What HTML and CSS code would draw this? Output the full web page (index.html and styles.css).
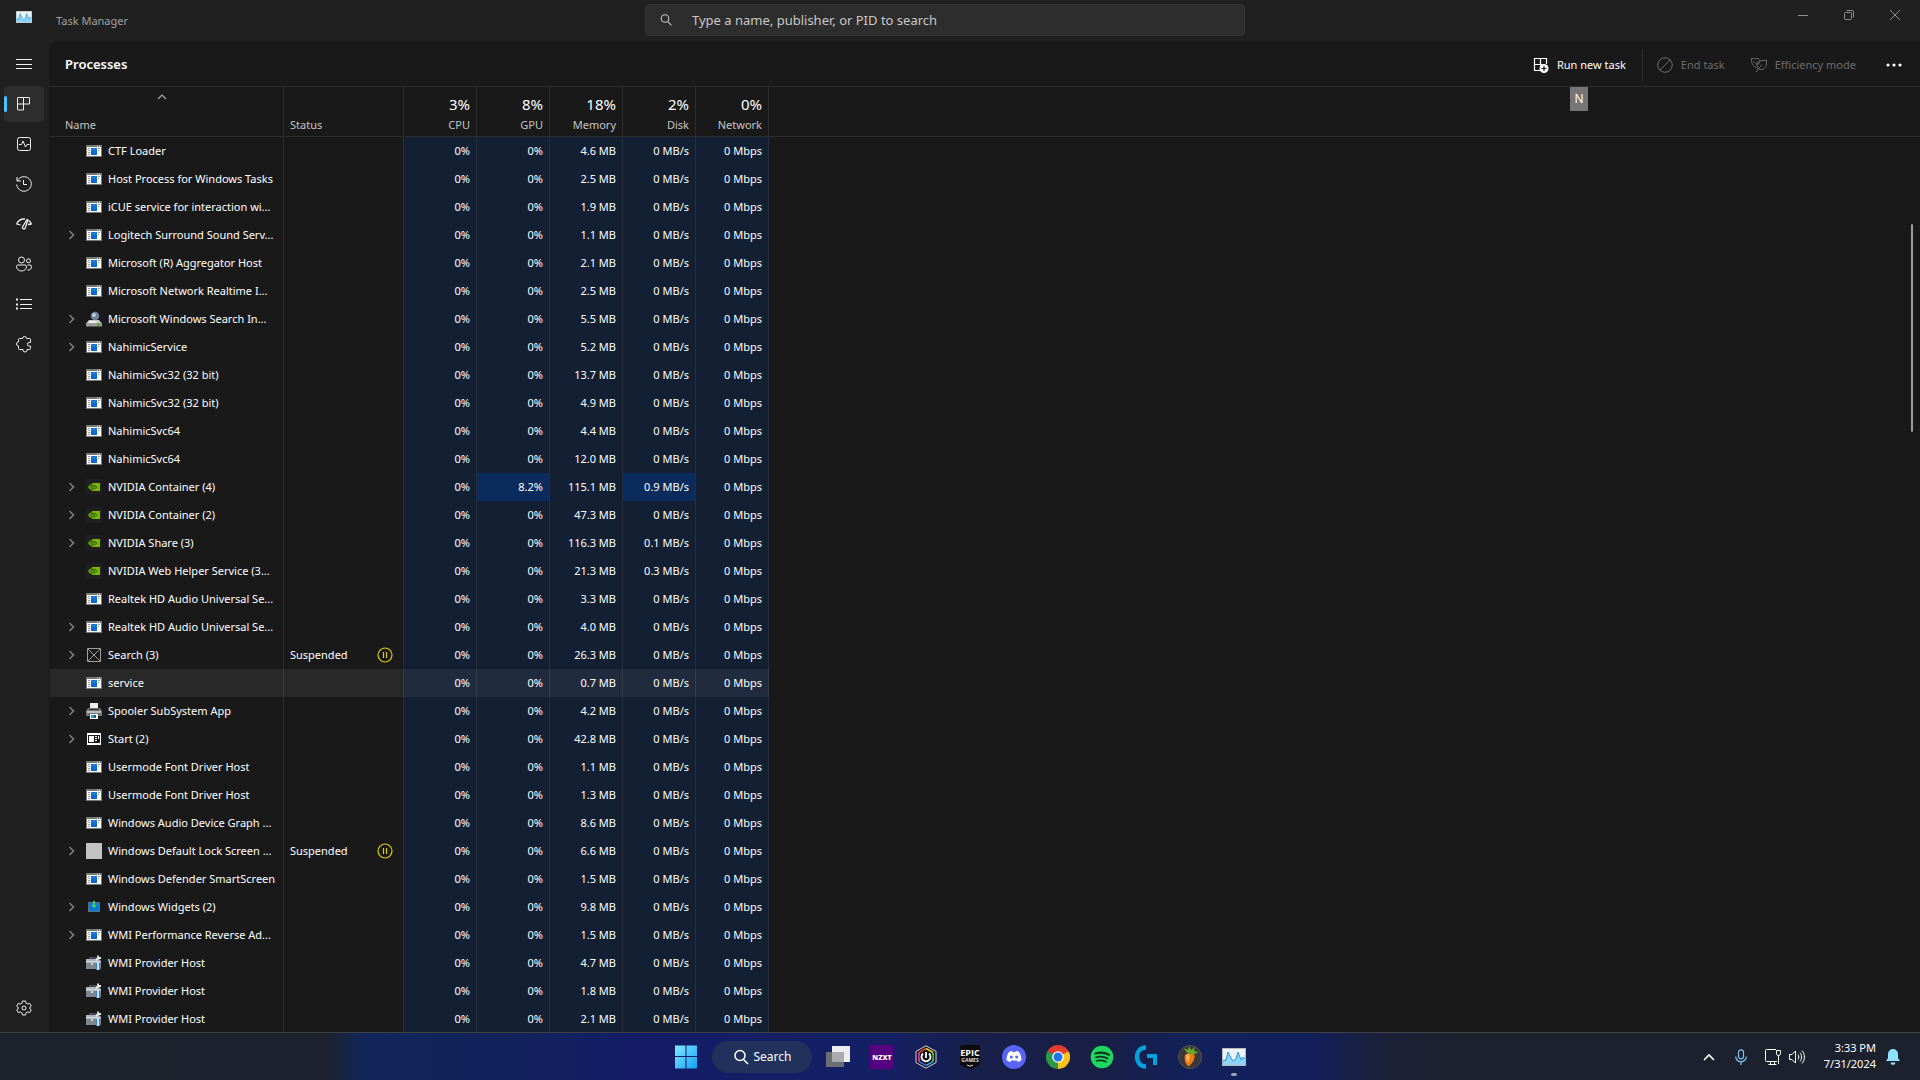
FILE: index.html
```html
<!DOCTYPE html>
<html lang="en">
<head>
  <meta charset="UTF-8">
  <meta name="viewport" content="width=device-width, initial-scale=1.0">
  <title>Task Manager</title>
  <link rel="stylesheet" href="styles.css">
</head>
<body>
  <!-- Process icons, used by the table rows -->
  <svg class="sprite" aria-hidden="true">
    <symbol id="icon-app" viewBox="0 0 16 16">
      <path fill="#767676" d="M0 2h16v12H0z"/>
      <path fill="#fff" d="M1 4h14v9H1z"/>
      <path fill="#0a6cc8" d="M5 5h6v7H5z"/>
      <path fill="#1a7ad2" d="M5 5h6v3H5z"/>
      <path stroke="#9a9a9a" d="M2 5.500h2M2 7.500h2M2 9.500h2M2 11.500h2M12 5.500h2M12 7.500h1"/>
      <path fill="#ddd" d="M11 2.500h1v1h-1zM13 2.500h1v1h-1z"/>
    </symbol>
    <symbol id="icon-indexer" viewBox="0 0 16 16">
      <circle cx="9" cy="5" r="4.300" fill="#6f8299"/>
      <circle cx="8" cy="4" r="2" fill="#b9cbe0"/>
      <path fill="#c9c9c9" d="M3 9h10l3 3.500H0z"/>
      <path fill="#ededed" d="M4 10h6l1 2H2z"/>
      <path fill="#9b9b9b" d="M0 12h16v3.500H0z"/>
      <path fill="#4eb02c" d="M11 12h3v3h-3z"/>
    </symbol>
    <symbol id="icon-nvidia" viewBox="0 0 16 16">
      <path fill="#1f1f1f" d="M0 0h16v16H0z"/>
      <path fill="#76b900" d="M6 4h8v8H6z"/>
      <path fill="#6aa600" d="M2 8c1.500-2.500 4-3.500 7-2.700 1 .7 1.800 1.700 2 2.700-2 3-6 3.800-7.500 2z"/>
      <path fill="none" stroke="#2c4d03" stroke-width=".7" d="M3.500 8c1.500-2 5-2.500 7.500.3-1.800 2.400-5 2.500-6 .4.600-1.700 2.500-1.800 3.800-.2-.8 1-1.500 1-2.300.3"/>
    </symbol>
    <symbol id="icon-missing" viewBox="0 0 16 16">
      <path fill="none" stroke="#a0a0a0" d="M1.500 1.500h13v13h-13zM2 2l12 12M14 2 2 14"/>
    </symbol>
    <symbol id="icon-printer" viewBox="0 0 16 16">
      <path fill="#eee" d="M4 0h8v7H4z"/>
      <path fill="#777" d="M2 5h12l2 3v5H0V8z"/>
      <path fill="#bdbdbd" d="M1 8h14v2H1z"/>
      <path fill="#333" d="M3 6h10v1H3zM3 11h10v1H3z"/>
      <path fill="#fff" d="M4 11h8v5H4z"/>
      <path fill="#2aa1b8" d="M5 12h3v3H5z"/>
      <path fill="#1d5d8c" d="M8 12h2v3H8z"/>
    </symbol>
    <symbol id="icon-start" viewBox="0 0 16 16">
      <path fill="#fff" d="M1 2h14v12H1z"/>
      <path fill="#1a1a1a" d="M2 4h12v8H2z"/>
      <path fill="#fff" d="M3 5h5v6H3zM9 5h2v1H9zM9 7h2v1H9zM9 9h2v1H9zM12 5h1v3h-1z"/>
    </symbol>
    <symbol id="icon-blank" viewBox="0 0 16 16">
      <path fill="#c3c3c3" d="M0 0h16v16H0z"/>
    </symbol>
    <symbol id="icon-widgets" viewBox="0 0 16 16">
      <path fill="#5a6f86" d="M2 3h12v10H2z"/>
      <path fill="#0b78d0" d="M3 4h10v8H3z"/>
      <path fill="#45d06a" d="M7 2h2v4h2L8 9 5 6h2z"/>
    </symbol>
    <symbol id="icon-toolbox" viewBox="0 0 16 16">
      <path fill="#454a52" d="M3 2h7v3H3z"/>
      <path fill="#aeb5be" d="M0 4h13l2 2v2H0z"/>
      <path fill="#7d858f" d="M0 8h15v6H0z"/>
      <path fill="#d4d8dd" d="M0 6h12v1H0zM5 8h2v2H5z"/>
      <path fill="none" stroke="#ececec" stroke-width="1.800" d="m10 5 3-3M12 .5v2.500h3"/>
      <path fill="#3f7fb8" d="M10 8h4v7h-4z"/>
      <path fill="#c4e4fa" d="M11 6h2v9h-2z"/>
    </symbol>
    <symbol id="icon-chevron" viewBox="0 0 8 10">
      <path fill="none" stroke="#7d7d7d" stroke-width="1.600" d="m1.500 1 4 4-4 4"/>
    </symbol>
    <symbol id="icon-pause" viewBox="0 0 16 16">
      <circle cx="8" cy="8" r="7" fill="none" stroke="#e2cd00" stroke-width="1.200"/>
      <path stroke="#e2cd00" stroke-width="1.200" d="M6.500 5v6M9.500 5v6"/>
    </symbol>
    <symbol id="icon-taskmgr" viewBox="0 0 24 18">
      <path fill="#b5b9bd" d="M0 0h24v18H0z"/>
      <path fill="#eef3f7" d="M1 1h22v16H1z"/>
      <path fill="#8ed3f8" d="M1 12l3-1 2-7 3 6 2 3 3-2 2-7 3 8 2-3 2 2v6H1z"/>
      <path fill="none" stroke="#2297dd" d="M1 13l3-1 2-8 3 6 2 3 3-2 2-7 3 8 2-3 2 2"/>
    </symbol>
  </svg>

  <div class="window">
    <header class="titlebar">
      <div class="app-title">
        <svg class="app-icon" viewBox="0 0 24 18"><use href="#icon-taskmgr"/></svg>
        <span>Task Manager</span>
      </div>
      <label class="search-box">
        <svg width="12" height="12" viewBox="0 0 12 12" fill="none" stroke="#c8c8c8" stroke-width="1.100"><circle cx="5" cy="4.500" r="3.800"/><path d="m7.600 7.400 3.800 4"/></svg>
        <input type="search" aria-label="Search processes" placeholder="Type a name, publisher, or PID to search">
      </label>
      <div class="window-controls">
        <button type="button" aria-label="Minimize"><svg width="12" height="12" viewBox="0 0 12 12"><path d="M1 6.500h10"/></svg></button>
        <button type="button" aria-label="Restore"><svg width="12" height="12" viewBox="0 0 12 12"><rect x="1.500" y="3.500" width="7" height="7" rx="1"/><path d="M3.500 1.500H9A1.500 1.500 0 0 1 10.500 3v5.500"/></svg></button>
        <button type="button" aria-label="Close"><svg width="12" height="12" viewBox="0 0 12 12"><path d="m1 1 10 10M11 1 1 11"/></svg></button>
      </div>
    </header>

    <div class="body">
      <nav class="sidebar">
        <button type="button" aria-label="Open navigation"><svg viewBox="0 0 16 16"><path d="M0 3.500h16M0 8.500h16M0 12.500h16"/></svg></button>
        <button type="button" class="active" aria-label="Processes"><svg viewBox="0 0 16 16"><path d="M2 1.500h11a.5.5 0 0 1 .5.5v6H7.500v6H2a.5.5 0 0 1-.5-.5V2a.5.5 0 0 1 .5-.5zM7.500 1.500v6.500M1.500 8H8"/></svg></button>
        <button type="button" aria-label="Performance"><svg viewBox="0 0 16 16"><rect x="1.500" y="1.500" width="13" height="13" rx="2"/><path d="M3 8.500h2.500L7 5l2.500 6L11 8.500h2.500"/></svg></button>
        <button type="button" aria-label="App history"><svg viewBox="0 0 16 16"><path d="M1 1v4h4M1.300 5A7.300 7.300 0 1 1 .7 8.500M7.500 4v4.500H11"/></svg></button>
        <button type="button" aria-label="Startup apps"><svg viewBox="0 0 16 16"><path stroke-width="1.300" d="M.5 8.500A8.500 8.500 0 0 1 9 3M13 4.500a8 8 0 0 1 2.500 4M1 8l3.500 1M12 8.500l3.500-.5M11 3.500 6.500 11a1.500 1.500 0 0 0 2.500 1.500L12 4z"/></svg></button>
        <button type="button" aria-label="Users"><svg viewBox="0 0 16 16"><circle cx="5.500" cy="4" r="3"/><circle cx="12.500" cy="4.800" r="2"/><path d="M2 9h7a1.500 1.500 0 0 1 1.500 1.500C10.500 13.500 8 15 5.500 15S.5 13.500.5 10.500A1.500 1.500 0 0 1 2 9zM11.500 9H14a1.500 1.500 0 0 1 1.500 1.500c0 2.500-1.500 4-4 3.500"/></svg></button>
        <button type="button" aria-label="Details"><svg viewBox="0 0 16 16"><path d="M4 3.500h12M4 8.500h12M4 12.500h12"/><path d="M0 3.500h2M0 8.500h2M0 12.500h2" stroke-width="2"/></svg></button>
        <button type="button" aria-label="Services"><svg viewBox="0 0 16 16"><path stroke-linejoin="round" d="M3.500 2.500h3a2 2 0 0 1 4 0h3a1 1 0 0 1 1 1v3h-1.300a1.800 1.800 0 0 0 0 3.600h1.300v2.400a1 1 0 0 1-1 1h-2.500v.5a2 2 0 0 1-4 0v-.5H3.500a1 1 0 0 1-1-1V10a2 2 0 0 1 0-4V3.500a1 1 0 0 1 1-1z"/></svg></button>
        <button type="button" class="settings" aria-label="Settings"><svg viewBox="0 0 16 16"><circle cx="8" cy="8" r="2"/><path d="M6.500 1h3l.6 2.200 1.400.8 2.200-.6 1.500 2.600L13.500 8l1.700 2-1.500 2.600-2.200-.6-1.400.8L9.500 15h-3l-.6-2.200-1.400-.8-2.200.6L.8 10l1.700-2L.8 6l1.500-2.600 2.200.6 1.400-.8z"/></svg></button>
      </nav>

      <main class="content">
        <div class="toolbar">
          <h1>Processes</h1>
          <div class="actions">
            <button type="button" class="run-task">
              <svg width="16" height="16" viewBox="0 0 16 16"><path fill="none" stroke="#fff" stroke-width="1.200" d="M7 13.500H1.500v-12h12V7M7.500 1.500v7M1.500 7.500H9"/><circle cx="11" cy="11.500" r="4.500" fill="#fff"/><path stroke="#191919" stroke-width="1.200" d="M11 9v5M8.500 11.500h5"/></svg>
              <span>Run new task</span>
            </button>
            <button type="button" class="end-task" disabled>
              <svg width="16" height="16" viewBox="0 0 16 16" fill="none" stroke="#6c6c6c"><circle cx="8" cy="8" r="7.300"/><path d="M2.800 13.200 13.200 2.800"/></svg>
              <span>End task</span>
            </button>
            <button type="button" class="efficiency" disabled>
              <svg width="16" height="16" viewBox="0 0 16 16" fill="none" stroke="#6c6c6c"><path d="M5.500 10.500C2 9.500.5 7 .5 1.500c2.500 1 4.500-1 7 .3 1 .5 1.500 1 1.500 2M3 4.500l3.500 3.500L9 4.500"/><path d="M6.500 5.500C9 3 12 4 15.500 3c.3 5.500-1 9-4.500 9.500-3.500.5-5.500-1.500-4.500-7zM5 15l6-7.500"/></svg>
              <span>Efficiency mode</span>
            </button>
            <button type="button" class="more" aria-label="See more">
              <svg width="16" height="4" viewBox="0 0 16 4" fill="#fff"><circle cx="2" cy="2" r="1.600"/><circle cx="8" cy="2" r="1.600"/><circle cx="14" cy="2" r="1.600"/></svg>
            </button>
          </div>
          <kbd class="key-tip">N</kbd>
        </div>

        <div class="table-wrap">
          <table class="processes">
            <colgroup>
              <col class="col-name">
              <col class="col-status">
              <col class="col-value" span="5">
              <col>
            </colgroup>
            <thead>
              <tr>
                <th class="name" aria-sort="ascending"><button type="button"><svg width="10" height="6" viewBox="0 0 10 6"><path fill="none" stroke="#aaa" stroke-width="1.200" d="M1 5l4-4 4 4"/></svg><span>Name</span></button></th>
                <th class="status"><button type="button"><span>Status</span></button></th>
                <th><button type="button"><strong>3%</strong><span>CPU</span></button></th>
                <th><button type="button"><strong>8%</strong><span>GPU</span></button></th>
                <th><button type="button"><strong>18%</strong><span>Memory</span></button></th>
                <th><button type="button"><strong>2%</strong><span>Disk</span></button></th>
                <th><button type="button"><strong>0%</strong><span>Network</span></button></th>
                <td></td>
              </tr>
            </thead>
            <tbody id="process-list"></tbody>
          </table>
        </div>
        <div class="scroll-thumb"></div>
      </main>
    </div>
  </div>

  <footer class="taskbar">
    <div class="pinned">
      <button type="button" aria-label="Start">
        <svg width="24" height="24" viewBox="0 0 24 24"><defs><linearGradient id="win" x1="0" y1="0" x2="1" y2="1"><stop offset="0" stop-color="#7fe9ff"/><stop offset="1" stop-color="#14a0f5"/></linearGradient></defs><path fill="url(#win)" d="M1 .5h10.500V11H1zM12.500.5H23V11H12.500zM1 12h10.500v11.500H1zM12.500 12H23v11.500H12.500z"/></svg>
      </button>
      <button type="button" class="taskbar-search">
        <svg width="16" height="16" viewBox="0 0 16 16" fill="none" stroke="#fff" stroke-width="1.500"><circle cx="7" cy="6.500" r="5"/><path d="m10.500 10.500 4.500 4.500"/></svg>
        <span>Search</span>
      </button>
      <button type="button" aria-label="Task view">
        <svg width="24" height="24" viewBox="0 0 24 24"><path fill="#ededed" d="M6 1h18v16H6z"/><path fill="#6b6d72" d="M0 7h18v15H0z"/><path fill="#a9abaf" d="M6 7h12v10H6z"/></svg>
      </button>
      <button type="button" aria-label="NZXT CAM">
        <svg width="24" height="24" viewBox="0 0 24 24"><path fill="#56007f" d="M0 0h24v24H0z"/><text class="nzxt-text" x="12" y="15" text-anchor="middle">NZXT</text></svg>
      </button>
      <button type="button" aria-label="iCUE">
        <svg width="24" height="24" viewBox="0 0 24 24"><path fill="#111" stroke="#d7d7d7" d="m12 .8 10 5.600v11.200l-10 5.600-10-5.600V6.400z"/><g fill="none" stroke-width="2"><path stroke="#e2383c" d="m5 7.500 7-4"/><path stroke="#e6c52a" d="m12 3.500 7 4"/><path stroke="#37b34a" d="M19 7.500v9"/><path stroke="#2b9be8" d="m19 16.500-7 4"/><path stroke="#4b57dc" d="m12 20.500-7-4"/><path stroke="#d338b8" d="M5 16.500v-9"/></g><circle cx="12" cy="12" r="6.500" fill="#111"/><path fill="none" stroke="#fff" stroke-width="1.800" d="M9 8.500a4.500 4.500 0 1 0 6 0M12 7v6"/></svg>
      </button>
      <button type="button" aria-label="Epic Games">
        <svg width="24" height="24" viewBox="0 0 24 24"><path fill="#0c0c0e" d="M4 0h16a2 2 0 0 1 2 2v18l-10 4-10-4V2a2 2 0 0 1 2-2z"/><text class="epic-text" x="12" y="11" text-anchor="middle">EPIC</text><text class="games-text" x="12" y="17" text-anchor="middle">GAMES</text><path stroke="#ddd" fill="none" d="m9 20 3 1.200 3-1.200"/></svg>
      </button>
      <button type="button" aria-label="Discord">
        <svg width="24" height="24" viewBox="0 0 24 24"><circle cx="12" cy="12" r="12" fill="#5865f2"/><path fill="#fff" d="M7 7c1-.6 2-.9 3-1l.5 1h3l.5-1c1 .1 2 .4 3 1 1.800 2.500 2.600 5 2.400 8.200-1 .9-2.200 1.500-3.600 1.800l-.9-1.400h-5.800L8.200 17c-1.400-.3-2.600-.9-3.600-1.800C4.400 12 5.200 9.500 7 7z"/><circle cx="9.300" cy="12" r="1.500" fill="#5865f2"/><circle cx="14.700" cy="12" r="1.500" fill="#5865f2"/></svg>
      </button>
      <button type="button" aria-label="Google Chrome">
        <svg width="24" height="24" viewBox="0 0 24 24"><path fill="#e33b2e" d="M12 12 1.600 6A12 12 0 0 1 22.400 6z"/><path fill="#fcc31e" d="M12 12 22.400 6A12 12 0 0 1 12 24z"/><path fill="#2a9a48" d="M12 12v12A12 12 0 0 1 1.600 6z"/><path fill="#e33b2e" d="M12 6h10.400l-5.200 3z"/><path fill="#fcc31e" d="m17.200 15-5.200 9 .5-7z"/><path fill="#2a9a48" d="M1.600 6 6.800 15l2-4z"/><circle cx="12" cy="12" r="5.800" fill="#fff"/><circle cx="12" cy="12" r="4.500" fill="#1f74e8"/></svg>
      </button>
      <button type="button" aria-label="Spotify">
        <svg width="24" height="24" viewBox="0 0 24 24"><circle cx="12" cy="12" r="11.300" fill="#1ed760"/><g fill="none" stroke="#12331d" stroke-linecap="round"><path stroke-width="2.200" d="M5.500 8.500c4.500-1.300 9.500-.8 13.500 1.300"/><path stroke-width="1.900" d="M6 12.300c4-1.100 8-.7 11.500 1.100"/><path stroke-width="1.600" d="M6.500 15.800c3.500-.8 6.500-.5 9.500 1"/></g></svg>
      </button>
      <button type="button" aria-label="Logitech G HUB">
        <svg width="24" height="24" viewBox="0 0 24 24"><path fill="none" stroke="#00a3e0" stroke-width="4.500" d="M12 2.500C5.500 2.500 3 7.500 3 12s2.500 9.500 9 9.500"/><path fill="#00a3e0" d="M13 9h10v11h-4v-7h-6z"/></svg>
      </button>
      <button type="button" aria-label="FL Studio">
        <svg width="24" height="24" viewBox="0 0 24 24"><circle cx="12" cy="12" r="11.500" fill="#39373a" stroke="#555"/><path fill="#f07a14" d="M7 10c2-2.500 7.500-2.500 9.500 0 .8 4-2 8.500-6 11.500-3.500-3-4.500-7.500-3.500-11.500z"/><path fill="#ffb84d" d="M8.500 10c1-1 2.500-1 3 0 0 4-.5 5-1.500 8-1.500-3-2-5-1.500-8z"/><path fill="#6aa82a" d="M12 9C9 8 7 6 6 3l4 2 1-4 2 4 4-3-1 4 4 1c-2 2-5 3-8 2z"/></svg>
      </button>
      <button type="button" class="running" aria-label="Task Manager">
        <svg width="24" height="18" viewBox="0 0 24 18"><use href="#icon-taskmgr"/></svg>
      </button>
    </div>

    <div class="tray">
      <button type="button" aria-label="Show hidden icons"><svg width="12" height="8" viewBox="0 0 12 8"><path fill="none" stroke="#fff" stroke-width="1.600" d="m1 7 5-5 5 5"/></svg></button>
      <button type="button" aria-label="Microphone"><svg width="12" height="16" viewBox="0 0 12 16" fill="none" stroke="#7cc4ea" stroke-width="1.200"><rect x="3.500" y=".8" width="5" height="9" rx="2.500"/><path d="M.7 7.500a5.300 5.300 0 0 0 10.600 0M6 13v3"/></svg></button>
      <button type="button" class="network-sound" aria-label="Network and volume">
        <svg width="16" height="16" viewBox="0 0 16 16" fill="none" stroke="#fff"><path d="M11 .5H1.500a1 1 0 0 0-1 1v10a1 1 0 0 0 1 1H12M3.500 15.500h8M5.500 12.500v3M9.500 12.500v3M13.500 6.500V15M11.500 1.500h4v3a2 2 0 0 1-4 0z"/></svg>
        <svg width="16" height="16" viewBox="0 0 16 16" fill="none" stroke="#fff"><path d="M.5 5.500H3l3.500-3.500v12L3 10.500H.5zM9 5.500c1 1.500 1 3.500 0 5M11 3.500c2 2.500 2 6.500 0 9M13 1.500c3.200 3.500 3.200 9.500 0 13"/></svg>
      </button>
      <button type="button" class="clock"><span>3:33 PM</span><span>7/31/2024</span></button>
      <button type="button" class="bell" aria-label="Notifications"><svg width="14" height="16" viewBox="0 0 14 16" fill="#8ee3ff"><path d="M7 0a5 5 0 0 1 5 5v4l2 3H0l2-3V5a5 5 0 0 1 5-5zM4.500 13.500h5a2.500 2.500 0 0 1-5 0z"/></svg></button>
    </div>
  </footer>

  <script>
    // name, icon, memory, options
    const processes = [
      ['CTF Loader', 'app', '4.6 MB'],
      ['Host Process for Windows Tasks', 'app', '2.5 MB'],
      ['iCUE service for interaction wi...', 'app', '1.9 MB'],
      ['Logitech Surround Sound Serv...', 'app', '1.1 MB', { group: true }],
      ['Microsoft (R) Aggregator Host', 'app', '2.1 MB'],
      ['Microsoft Network Realtime I...', 'app', '2.5 MB'],
      ['Microsoft Windows Search In...', 'indexer', '5.5 MB', { group: true }],
      ['NahimicService', 'app', '5.2 MB', { group: true }],
      ['NahimicSvc32 (32 bit)', 'app', '13.7 MB'],
      ['NahimicSvc32 (32 bit)', 'app', '4.9 MB'],
      ['NahimicSvc64', 'app', '4.4 MB'],
      ['NahimicSvc64', 'app', '12.0 MB'],
      ['NVIDIA Container (4)', 'nvidia', '115.1 MB', { group: true, gpu: '8.2%', disk: '0.9 MB/s', hot: ['gpu', 'disk'] }],
      ['NVIDIA Container (2)', 'nvidia', '47.3 MB', { group: true }],
      ['NVIDIA Share (3)', 'nvidia', '116.3 MB', { group: true, disk: '0.1 MB/s' }],
      ['NVIDIA Web Helper Service (3...', 'nvidia', '21.3 MB', { disk: '0.3 MB/s' }],
      ['Realtek HD Audio Universal Se...', 'app', '3.3 MB'],
      ['Realtek HD Audio Universal Se...', 'app', '4.0 MB', { group: true }],
      ['Search (3)', 'missing', '26.3 MB', { group: true, status: 'Suspended' }],
      ['service', 'app', '0.7 MB', { hover: true }],
      ['Spooler SubSystem App', 'printer', '4.2 MB', { group: true }],
      ['Start (2)', 'start', '42.8 MB', { group: true }],
      ['Usermode Font Driver Host', 'app', '1.1 MB'],
      ['Usermode Font Driver Host', 'app', '1.3 MB'],
      ['Windows Audio Device Graph ...', 'app', '8.6 MB'],
      ['Windows Default Lock Screen ...', 'blank', '6.6 MB', { group: true, status: 'Suspended' }],
      ['Windows Defender SmartScreen', 'app', '1.5 MB'],
      ['Windows Widgets (2)', 'widgets', '9.8 MB', { group: true }],
      ['WMI Performance Reverse Ad...', 'app', '1.5 MB', { group: true }],
      ['WMI Provider Host', 'toolbox', '4.7 MB'],
      ['WMI Provider Host', 'toolbox', '1.8 MB'],
      ['WMI Provider Host', 'toolbox', '2.1 MB']
    ];

    function svg(id, cls) {
      return `<svg class="${cls}"><use href="#icon-${id}"/></svg>`;
    }

    function row([name, icon, memory, opts = {}]) {
      const values = { cpu: '0%', gpu: opts.gpu || '0%', memory, disk: opts.disk || '0 MB/s', network: '0 Mbps' };
      const hot = opts.hot || [];
      const expand = opts.group
        ? `<button type="button" class="expand" aria-label="Expand ${name}">${svg('chevron', 'chevron')}</button>`
        : '<span class="expand"></span>';
      const status = opts.status ? `<div class="status-cell"><span>${opts.status}</span>${svg('pause', 'icon')}</div>` : '';
      const cells = Object.keys(values)
        .map(key => `<td class="value${hot.includes(key) ? ' hot' : ''}">${values[key]}</td>`)
        .join('');

      return `<tr${opts.hover ? ' class="hover"' : ''}>
        <td><div class="name-cell">${expand}${svg(icon, 'icon')}<span>${name}</span></div></td>
        <td>${status}</td>${cells}<td class="filler"></td>
      </tr>`;
    }

    document.getElementById('process-list').innerHTML = processes.map(row).join('');
  </script>
</body>
</html>
```
FILE: styles.css
```css
* {
  margin: 0;
  padding: 0;
  box-sizing: border-box;
}

body {
  height: 100vh;
  display: flex;
  flex-direction: column;
  overflow: hidden;
  font-family: 'Noto Sans', 'Open Sans', sans-serif;
  font-size: 11px;
  line-height: 16px;
  background: #202020;
  color: #fff;
}

button,
input {
  font: inherit;
  color: inherit;
  background: none;
  border: none;
}

svg {
  display: block;
  flex-shrink: 0;
}

.sprite {
  position: absolute;
  width: 0;
  height: 0;
}

.window {
  flex: 1;
  min-height: 0;
  display: flex;
  flex-direction: column;
}

/* Title bar */
.titlebar {
  height: 41px;
  flex-shrink: 0;
  display: grid;
  grid-template-columns: 43fr 600px 45fr;
  align-items: start;
}

.app-title {
  display: flex;
  align-items: center;
  gap: 24px;
  height: 41px;
  padding-left: 16px;
  color: #a0a0a0;
}

.app-icon {
  width: 16px;
  height: 12px;
  margin-bottom: 8px;
}

.search-box {
  display: flex;
  align-items: center;
  gap: 20px;
  height: 32px;
  margin-top: 4px;
  padding: 0 14px;
  background: #2d2d2d;
  border: 1px solid #333;
  border-radius: 4px;
}

.search-box input {
  flex: 1;
  font-size: 13px;
  outline: none;
}

.search-box input::placeholder {
  color: #c8c8c8;
  opacity: 1;
}

.window-controls {
  display: flex;
  justify-content: flex-end;
  padding-right: 2px;
}

.window-controls button {
  width: 46px;
  height: 29px;
  display: flex;
  align-items: center;
  justify-content: center;
}

.window-controls svg {
  fill: none;
  stroke: #8c8c8c;
}

/* Sidebar */
.body {
  flex: 1;
  min-height: 0;
  display: flex;
}

.sidebar {
  width: 49px;
  flex-shrink: 0;
  display: flex;
  flex-direction: column;
  gap: 4px;
  padding: 5px 5px 6px 4px;
}

.sidebar button {
  position: relative;
  height: 36px;
  display: flex;
  align-items: center;
  justify-content: center;
  border-radius: 4px;
}

.sidebar svg {
  width: 16px;
  height: 16px;
  fill: none;
  stroke: #f0f0f0;
  overflow: visible;
}

.sidebar .active {
  background: #2d2d2d;
}

.sidebar .active::before {
  content: '';
  position: absolute;
  left: 0;
  top: 10px;
  width: 3px;
  height: 16px;
  border-radius: 2px;
  background: #4cc2ff;
}

.sidebar .settings {
  margin-top: auto;
}

/* Content */
.content {
  position: relative;
  flex: 1;
  min-width: 0;
  display: flex;
  flex-direction: column;
  background: #191919;
  border-top-left-radius: 8px;
}

.toolbar {
  position: relative;
  height: 46px;
  flex-shrink: 0;
  display: flex;
  align-items: center;
  justify-content: space-between;
  padding: 0 10px 0 16px;
  border-bottom: 1px solid #2d2d2d;
}

.toolbar h1 {
  font-size: 13px;
  font-weight: 600;
}

.actions {
  display: flex;
  align-items: center;
  padding-top: 2px;
}

.actions button {
  display: flex;
  align-items: center;
  gap: 8px;
  height: 32px;
}

.actions button:disabled {
  color: #6c6c6c;
}

.actions .run-task {
  padding-right: 16px;
  border-right: 1px solid #2d2d2d;
}

.actions .end-task {
  padding: 0 26px 0 14px;
}

.actions .more {
  padding: 0 8px 0 30px;
}

.key-tip {
  position: absolute;
  top: 46px;
  right: 332px;
  width: 18px;
  height: 24px;
  font: inherit;
  font-size: 12px;
  line-height: 24px;
  text-align: center;
  background: #767676;
}

.scroll-thumb {
  position: absolute;
  top: 183px;
  right: 7px;
  width: 2px;
  height: 208px;
  border-radius: 1px;
  background: #9d9d9d;
}

/* Process table */
.table-wrap {
  flex: 1;
  min-height: 0;
  overflow: hidden;
  padding-left: 1px;
}

.processes {
  width: 100%;
  table-layout: fixed;
  border-collapse: separate;
  border-spacing: 0;
}

.col-name {
  width: 234px;
}

.col-status {
  width: 120px;
}

.col-value {
  width: 73px;
}

.processes thead tr > * {
  height: 50px;
  border-bottom: 1px solid #2d2d2d;
}

.processes th {
  border-right: 1px solid #2d2d2d;
  font-weight: 400;
}

.processes th button {
  width: 100%;
  height: 49px;
  display: flex;
  flex-direction: column;
  align-items: flex-end;
  justify-content: flex-end;
  gap: 3px;
  padding: 0 6px 3px 0;
  color: #c5c5c5;
}

.processes th strong {
  font-size: 15px;
  font-weight: 400;
  line-height: 20px;
  color: #fff;
}

.processes .name button {
  align-items: flex-start;
  justify-content: space-between;
  padding-top: 7px;
  padding-right: 10px;
}

.processes .name span {
  padding-left: 15px;
}

.processes .name svg {
  align-self: center;
}

.processes .status button {
  align-items: flex-start;
  padding-left: 6px;
}

.processes tbody td {
  height: 28px;
  border-right: 1px solid #2b2b2b;
  white-space: nowrap;
}

.processes tbody .value {
  padding-right: 6px;
  text-align: right;
  background: #132033;
  border-right-color: #262e3a;
}

.processes tbody .hot {
  background: #0b2b5c;
}

.processes tbody .filler {
  border-right: none;
}

.processes .hover td:not(.filler) {
  background: #282828;
  border-right-color: #393939;
}

.processes .hover td.value:not(.filler) {
  background: #202c3e;
  border-right-color: #343d4a;
}

.name-cell {
  display: flex;
  align-items: center;
  padding-left: 14px;
}

.name-cell .expand {
  width: 22px;
  height: 16px;
  display: flex;
  align-items: center;
  padding-left: 4px;
}

.name-cell .icon {
  margin-right: 6px;
}

.icon {
  width: 16px;
  height: 16px;
}

.chevron {
  width: 8px;
  height: 10px;
}

.status-cell {
  display: flex;
  align-items: center;
  justify-content: space-between;
  padding: 0 10px 0 6px;
}

/* Taskbar */
.taskbar {
  height: 48px;
  flex-shrink: 0;
  display: grid;
  grid-template-columns: 1fr auto 1fr;
  border-top: 1px solid #3e4247;
  background: linear-gradient(90deg, #1e222d 0%, #1c222e 17%, #12265a 19%, #11235a 26%, #131c66 33%, #142064 46%, #171f4a 51%, #191f45 57%, #12215a 62%, #111f5c 68%, #1a2038 72%, #1d212d 76%, #1d212d 100%);
}

.pinned {
  grid-column: 2;
  display: flex;
  align-items: center;
}

.pinned button {
  position: relative;
  width: 44px;
  height: 47px;
  display: flex;
  align-items: center;
  justify-content: center;
}

.pinned .taskbar-search {
  width: 100px;
  height: 32px;
  margin: 0 4px;
  gap: 5px;
  font-size: 12px;
  background: #20315c;
  border-radius: 16px;
}

.pinned .running::after {
  content: '';
  position: absolute;
  bottom: 4px;
  width: 6px;
  height: 3px;
  border-radius: 2px;
  background: #9a9fae;
}

.nzxt-text {
  font: 800 7px 'Open Sans', sans-serif;
  fill: #fff;
}

.epic-text {
  font: 700 9px 'Open Sans', sans-serif;
  fill: #fff;
}

.games-text {
  font: 700 5px 'Open Sans', sans-serif;
  fill: #ddd;
}

.tray {
  display: flex;
  align-items: center;
  justify-content: flex-end;
  padding-right: 20px;
}

.tray button {
  width: 32px;
  height: 47px;
  display: flex;
  align-items: center;
  justify-content: center;
}

.tray .network-sound {
  width: 56px;
  gap: 8px;
}

.tray .clock {
  width: 63px;
  flex-direction: column;
  align-items: flex-end;
  padding-bottom: 2px;
}

.tray .bell {
  width: 24px;
  justify-content: flex-end;
}
```
